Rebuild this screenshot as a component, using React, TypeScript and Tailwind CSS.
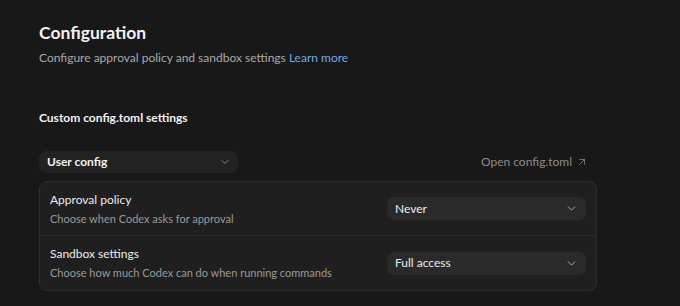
import { ChevronDown, ArrowUpRight } from 'lucide-react';

const font = { fontFamily: 'Lato, "Noto Sans", sans-serif' };

function Select({ label }: { label: string }) {
  return (
    <div className="w-[199px] h-[23px] rounded-[7px] bg-[#2a2a2a] flex items-center justify-between pl-2 pr-[8px]">
      <span className="text-[12px] text-[#ececec]">{label}</span>
      <ChevronDown className="w-[13px] h-[13px] text-[#bdbdbd]" strokeWidth={1.6} />
    </div>
  );
}

function SettingRow({ title, desc, value, last }: { title: string; desc: string; value: string; last?: boolean }) {
  return (
    <div className={`h-[54px] flex items-center justify-between pl-[10px] pr-[10px] ${last ? '' : 'border-b border-[#2c2c2c]'}`}>
      <div className="flex flex-col gap-[1px]">
        <span className="text-[12px] leading-[18px] text-[#ececec]">{title}</span>
        <span className="text-[11px] leading-[17px] text-[#9a9a9a]">{desc}</span>
      </div>
      <Select label={value} />
    </div>
  );
}

export default function App() {
  return (
    <div className="w-[680px] h-[306px] bg-[#181818] pl-[39px] pt-[20px] overflow-hidden" style={font}>
      <div className="w-[558px]">
        {/* Header */}
        <h1 className="text-[17.5px] leading-[26px] font-bold text-[#f2f2f2]">Configuration</h1>
        <p className="mt-[3px] text-[12px] leading-[18px] text-[#a8a8a8]">
          Configure approval policy and sandbox settings <span className="text-[#6ea8e6]">Learn more</span>
        </p>

        <h2 className="mt-[42px] text-[12px] leading-[18px] font-bold text-[#f2f2f2]">Custom config.toml settings</h2>

        {/* Config source */}
        <div className="mt-[24px] flex items-center justify-between pr-[9px]">
          <div className="w-[199px] h-[22px] rounded-[7px] bg-[#222222] flex items-center justify-between pl-2 pr-[7px]">
            <span className="text-[12px] font-bold text-[#f2f2f2]">User config</span>
            <ChevronDown className="w-[12px] h-[12px] text-[#9a9a9a]" strokeWidth={1.6} />
          </div>
          <div className="flex items-center gap-[4px] text-[12px] text-[#8c8c8c]">
            Open config.toml
            <ArrowUpRight className="w-[12px] h-[12px]" strokeWidth={1.5} />
          </div>
        </div>

        {/* Settings card */}
        <div className="mt-[8px] rounded-[8px] border border-[#2c2c2c] bg-[#1f1f1f]">
          <SettingRow title="Approval policy" desc="Choose when Codex asks for approval" value="Never" />
          <SettingRow title="Sandbox settings" desc="Choose how much Codex can do when running commands" value="Full access" last />
        </div>
      </div>
    </div>
  );
}
